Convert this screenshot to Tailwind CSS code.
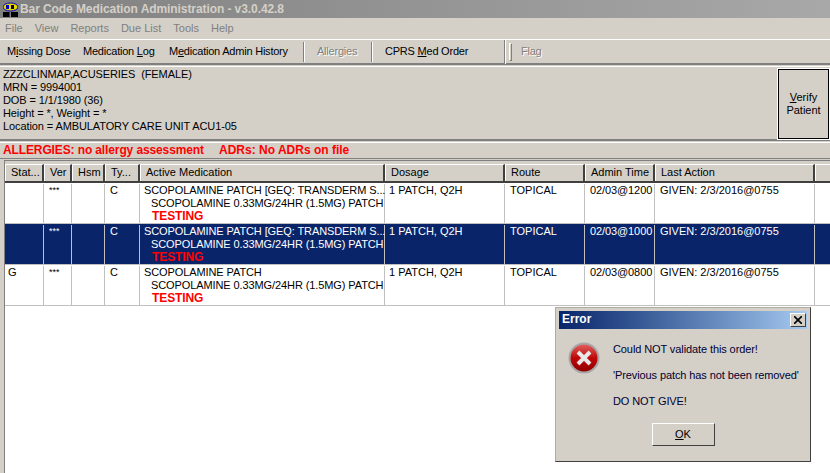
<!DOCTYPE html>
<html lang="en">
<head>
  <meta charset="UTF-8" />
  <title>Bar Code Medication Administration</title>
  <script src="https://cdn.jsdelivr.net/npm/@tailwindcss/browser@4"></script>
</head>
<body class="relative w-[830px] h-[473px] overflow-hidden bg-[#d4d0c8] text-black text-[11px] leading-[13px] font-['Liberation_Sans',sans-serif]">
  <!-- Title bar -->
  <div class="h-[18px] flex items-center bg-gradient-to-r from-[#808080] to-[#a8a8a8]">
    <svg class="ml-[3px] w-[15px] h-[15px] shrink-0" viewBox="0 0 15 15">
      <rect x="0" y="10" width="6.500" height="5" fill="#000" />
      <rect x="8" y="10" width="7" height="5" fill="#000" />
      <ellipse cx="7.500" cy="5" rx="7.500" ry="4" fill="#e8d800" stroke="#0000c0" />
      <rect x="3" y="3" width="3" height="4" fill="#0000c0" />
      <rect x="8" y="3" width="3" height="4" fill="#000" />
    </svg>
    <span class="ml-[2px] font-bold text-[12px] text-[#d4d0c8] tracking-[-0.08px]">Bar Code Medication Administration - v3.0.42.8</span>
  </div>

  <!-- Menu -->
  <div class="h-[20px] flex items-center gap-[12px] pl-[5px] text-[#808080]">
    <span>File</span><span>View</span><span>Reports</span><span>Due List</span><span>Tools</span><span>Help</span>
  </div>

  <!-- Toolbar -->
  <div class="h-[26px] mt-[1px] flex items-center border-t border-t-white border-b-2 border-b-[#808080] pl-[7px] whitespace-nowrap tracking-[-0.22px]">
    <span class="w-[63px]">M<u>i</u>ssing Dose</span>
    <span class="ml-[13px] w-[73px]">Medication <u>L</u>og</span>
    <span class="ml-[13px] w-[119px]">M<u>e</u>dication Admin History</span>
    <div class="ml-[15px] w-[2px] h-[20px] border-l border-l-[#808080] border-r border-r-white"></div>
    <span class="ml-[12px] w-[40px] text-[#808080] [text-shadow:1px_1px_0_#fff]">Allergies</span>
    <div class="ml-[14px] w-[2px] h-[20px] border-l border-l-[#808080] border-r border-r-white"></div>
    <span class="ml-[12px] w-[83px]">CPRS <u>M</u>ed Order</span>
    <div class="ml-[36px] w-[2px] h-[24px] border-l border-l-[#808080] border-r border-r-white"></div>
    <div class="ml-[3px] w-[3px] h-[18px] border border-[#808080] border-l-white border-t-white"></div>
    <span class="ml-[9px] text-[#808080] [text-shadow:1px_1px_0_#fff]">Flag</span>
  </div>

  <!-- Patient panel -->
  <div class="h-[75px] mt-[1px] flex justify-between border-t border-t-white border-b-2 border-b-[#808080]">
    <div class="pl-[3px] pt-[1px] tracking-[-0.1px]">
      <div>ZZZCLINMAP,ACUSERIES&nbsp; (FEMALE)</div>
      <div>MRN = 9994001</div>
      <div>DOB = 1/1/1980 (36)</div>
      <div>Height = *, Weight = *</div>
      <div>Location = AMBULATORY CARE UNIT ACU1-05</div>
    </div>
    <div class="w-[51px] h-[70px] mt-[2px] mr-[1px] flex flex-col items-center justify-center border border-black outline outline-white text-center">
      <span><u>V</u>erify</span>
      <span>Patient</span>
    </div>
  </div>

  <!-- Allergies -->
  <div class="h-[17px] mt-[1px] flex items-center border-t border-t-white border-b border-b-[#808080] pl-[3px] pb-[1px] font-bold text-[#ff0000] text-[12px] whitespace-nowrap">
    <span class="w-[200px] tracking-[-0.12px]">ALLERGIES: no allergy assessment</span>
    <span class="ml-[16px]">ADRs: No ADRs on file</span>
  </div>

  <!-- Medication table -->
  <div class="ml-[4px] mt-[1px] h-[320px] bg-white border-t border-l border-[#808080]">
    <div class="h-[3px] bg-[#d4d0c8]"></div>
    <div class="grid grid-cols-[39px_28px_33px_35px_245px_120px_80px_70px_160px_1fr] h-[17px] bg-[#d4d0c8] whitespace-nowrap">
      <div class="border-r-2 border-r-[#404040] border-t border-t-white border-l border-l-white pl-[5px] pt-[1px]">Stat...</div>
      <div class="border-r-2 border-r-[#404040] border-t border-t-white border-l border-l-white pl-[5px] pt-[1px]">Ver</div>
      <div class="border-r-2 border-r-[#404040] border-t border-t-white border-l border-l-white pl-[5px] pt-[1px]">Hsm</div>
      <div class="border-r-2 border-r-[#404040] border-t border-t-white border-l border-l-white pl-[5px] pt-[1px]">Ty...</div>
      <div class="border-r-2 border-r-[#404040] border-t border-t-white border-l border-l-white pl-[5px] pt-[1px]">Active Medication</div>
      <div class="border-r-2 border-r-[#404040] border-t border-t-white border-l border-l-white pl-[5px] pt-[1px]">Dosage</div>
      <div class="border-r-2 border-r-[#404040] border-t border-t-white border-l border-l-white pl-[5px] pt-[1px]">Route</div>
      <div class="border-r-2 border-r-[#404040] border-t border-t-white border-l border-l-white pl-[5px] pt-[1px]">Admin Time</div>
      <div class="border-r-2 border-r-[#404040] border-t border-t-white border-l border-l-white pl-[5px] pt-[1px]">Last Action</div>
      <div class="border-t border-t-white border-l border-l-white"></div>
    </div>
    <div class="h-[2px] bg-[#404040]"></div>

    <div class="grid grid-cols-[39px_28px_33px_35px_245px_120px_80px_70px_160px_1fr] h-[41px] border-b border-b-[#c0c0c0] pt-[1px] whitespace-nowrap">
      <div class="border-r border-r-[#c0c0c0] pl-[3px]"></div>
      <div class="border-r border-r-[#c0c0c0] pl-[5px] text-[9px]">***</div>
      <div class="border-r border-r-[#c0c0c0]"></div>
      <div class="border-r border-r-[#c0c0c0] pl-[5px]">C</div>
      <div class="border-r border-r-[#c0c0c0] pl-[4px] tracking-[-0.1px]">
        <div>SCOPOLAMINE PATCH [GEQ: TRANSDERM S...</div>
        <div class="pl-[7px]">SCOPOLAMINE 0.33MG/24HR (1.5MG) PATCH</div>
        <div class="pl-[8px] font-bold text-[12px] text-[#ff0000]">TESTING</div>
      </div>
      <div class="border-r border-r-[#c0c0c0] pl-[4px]">1 PATCH, Q2H</div>
      <div class="border-r border-r-[#c0c0c0] pl-[5px]">TOPICAL</div>
      <div class="border-r border-r-[#c0c0c0] pl-[5px] tracking-[-0.1px]">02/03@1200</div>
      <div class="border-r border-r-[#c0c0c0] pl-[5px]">GIVEN: 2/3/2016@0755</div>
      <div></div>
    </div>

    <div class="grid grid-cols-[39px_28px_33px_35px_245px_120px_80px_70px_160px_1fr] h-[41px] border-b border-b-[#c0c0c0] pt-[1px] bg-[#0a246a] text-white whitespace-nowrap">
      <div class="border-r border-r-[#c0c0c0] pl-[3px]"></div>
      <div class="border-r border-r-[#c0c0c0] pl-[5px] text-[9px]">***</div>
      <div class="border-r border-r-[#c0c0c0]"></div>
      <div class="border-r border-r-[#c0c0c0] pl-[5px]">C</div>
      <div class="border-r border-r-[#c0c0c0] pl-[4px] tracking-[-0.1px]">
        <div>SCOPOLAMINE PATCH [GEQ: TRANSDERM S...</div>
        <div class="pl-[7px]">SCOPOLAMINE 0.33MG/24HR (1.5MG) PATCH</div>
        <div class="pl-[8px] font-bold text-[12px] text-[#ff0000]">TESTING</div>
      </div>
      <div class="border-r border-r-[#c0c0c0] pl-[4px]">1 PATCH, Q2H</div>
      <div class="border-r border-r-[#c0c0c0] pl-[5px]">TOPICAL</div>
      <div class="border-r border-r-[#c0c0c0] pl-[5px] tracking-[-0.1px]">02/03@1000</div>
      <div class="border-r border-r-[#c0c0c0] pl-[5px]">GIVEN: 2/3/2016@0755</div>
      <div></div>
    </div>

    <div class="grid grid-cols-[39px_28px_33px_35px_245px_120px_80px_70px_160px_1fr] h-[41px] border-b border-b-[#c0c0c0] pt-[1px] whitespace-nowrap">
      <div class="border-r border-r-[#c0c0c0] pl-[3px]">G</div>
      <div class="border-r border-r-[#c0c0c0] pl-[5px] text-[9px]">***</div>
      <div class="border-r border-r-[#c0c0c0]"></div>
      <div class="border-r border-r-[#c0c0c0] pl-[5px]">C</div>
      <div class="border-r border-r-[#c0c0c0] pl-[4px] tracking-[-0.1px]">
        <div>SCOPOLAMINE PATCH</div>
        <div class="pl-[7px]">SCOPOLAMINE 0.33MG/24HR (1.5MG) PATCH</div>
        <div class="pl-[8px] font-bold text-[12px] text-[#ff0000]">TESTING</div>
      </div>
      <div class="border-r border-r-[#c0c0c0] pl-[4px]">1 PATCH, Q2H</div>
      <div class="border-r border-r-[#c0c0c0] pl-[5px]">TOPICAL</div>
      <div class="border-r border-r-[#c0c0c0] pl-[5px] tracking-[-0.1px]">02/03@0800</div>
      <div class="border-r border-r-[#c0c0c0] pl-[5px]">GIVEN: 2/3/2016@0755</div>
      <div></div>
    </div>
  </div>

  <!-- Error dialog -->
  <div class="absolute left-[555px] top-[307px] w-[256px] h-[155px] bg-[#d4d0c8] border border-[#404040] border-l-[#b0aca4] border-t-[#b0aca4] p-[3px]">
    <div class="h-[18px] flex items-center justify-between pl-[3px] pr-[1px] pb-[1px] bg-gradient-to-r from-[#0a246a] to-[#a6caf0]">
      <span class="font-bold text-[12px] text-white">Error</span>
      <span class="w-[16px] h-[14px] flex items-center justify-center bg-[#d4d0c8] border border-[#404040] border-l-white border-t-white">
        <svg class="w-[8px] h-[8px]" viewBox="0 0 8 8"><path d="M0 0L8 8M8 0L0 8" stroke="#000" stroke-width="1.600" /></svg>
      </span>
    </div>
    <div class="flex pl-[9px] pt-[13px]">
      <svg class="w-[32px] h-[32px] shrink-0" viewBox="0 0 32 32">
        <defs>
          <linearGradient id="redFill" x1="0" y1="0" x2="0" y2="1">
            <stop offset="0" stop-color="#e06060" />
            <stop offset="0.500" stop-color="#c00808" />
            <stop offset="1" stop-color="#900000" />
          </linearGradient>
        </defs>
        <circle cx="16" cy="16" r="15.500" fill="#a8a8a8" />
        <circle cx="16" cy="16" r="13.500" fill="url(#redFill)" />
        <path d="M10 10L22 22M22 10L10 22" stroke="#e8e8e8" stroke-width="4" />
      </svg>
      <div class="ml-[13px] pt-[1px] text-[#000030] whitespace-nowrap tracking-[-0.1px]">
        <div>Could NOT validate this order!</div>
        <div class="mt-[13px]">'Previous patch has not been removed'</div>
        <div class="mt-[13px]">DO NOT GIVE!</div>
      </div>
    </div>
    <div class="flex justify-center mt-[15px]">
      <div class="w-[63px] h-[23px] flex items-center justify-center border border-[#404040] border-l-white border-t-white"><span><u>O</u>K</span></div>
    </div>
  </div>
</body>
</html>
